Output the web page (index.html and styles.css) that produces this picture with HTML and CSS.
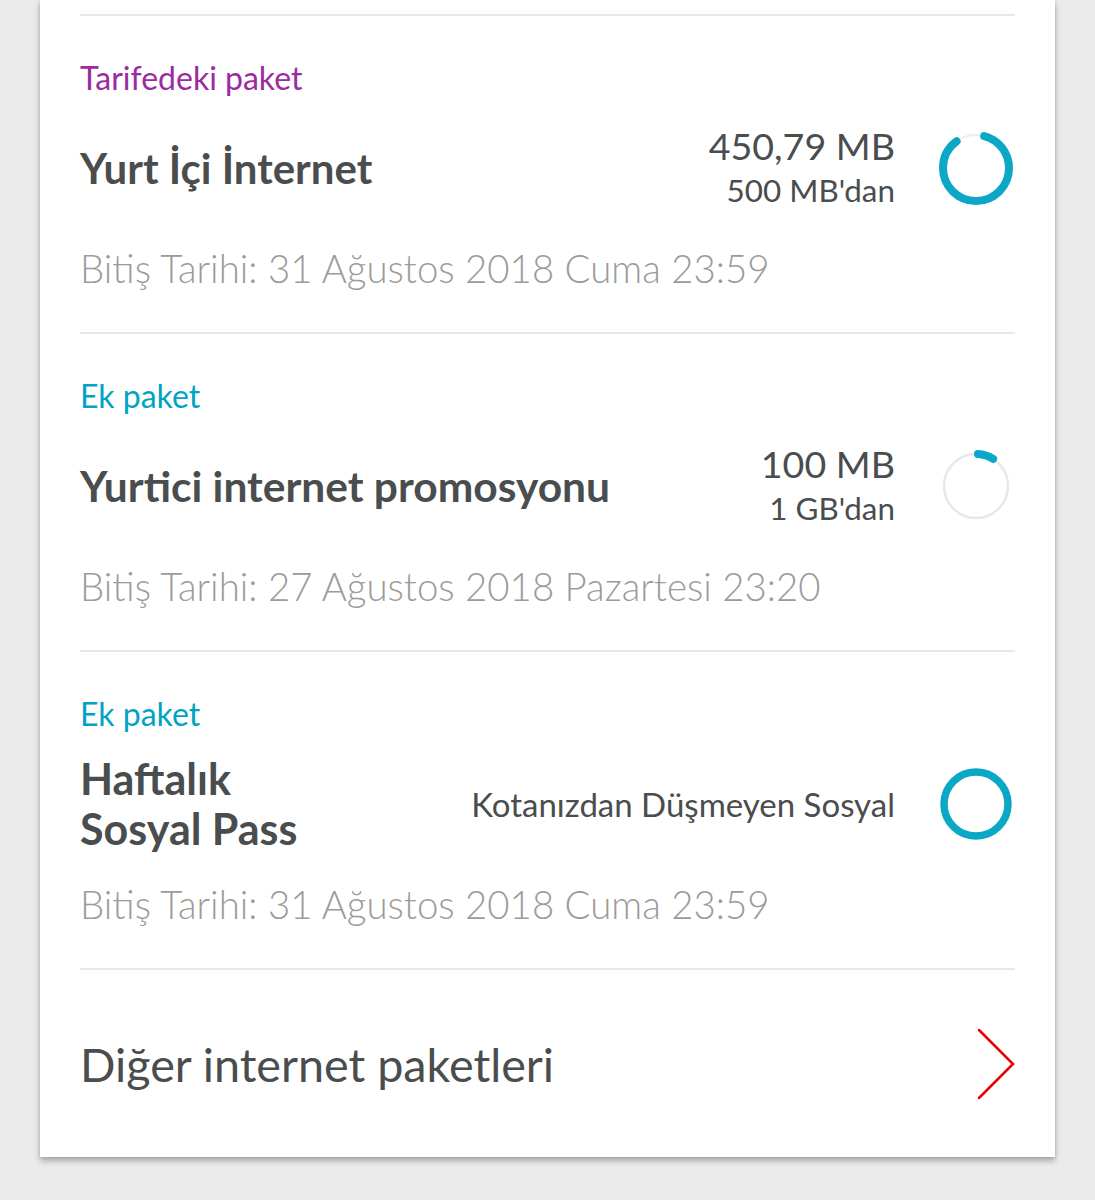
FILE: index.html
```html
<!DOCTYPE html>
<html lang="tr">
<head>
<meta charset="utf-8">
<title>Paketler</title>
<link rel="stylesheet" href="styles.css">
</head>
<body>
<div class="page">
<div class="card">
  <section class="pkg">
    <div class="label label-purple">Tarifedeki paket</div>
    <div class="row">
      <div class="title">Yurt İçi İnternet</div>
      <div class="amount">
        <div class="amount-main">450,79 MB</div>
        <div class="amount-sub">500 MB'dan</div>
      </div>
      <svg class="ring" viewBox="0 0 76 76" width="76" height="76">
        <circle cx="38" cy="38" r="33" fill="none" stroke="#ececec" stroke-width="2"/>
        <circle cx="38" cy="38" r="33" fill="none" stroke="#0aa8c6" stroke-width="8" stroke-linecap="round" pathLength="100" stroke-dasharray="86 100" stroke-dashoffset="-4" transform="rotate(-90 38 38)"/>
      </svg>
    </div>
    <div class="date">Bitiş Tarihi: 31 Ağustos 2018 Cuma 23:59</div>
  </section>
  <section class="pkg">
    <div class="label label-teal">Ek paket</div>
    <div class="row">
      <div class="title title-long">Yurtici internet promosyonu</div>
      <div class="amount">
        <div class="amount-main">100 MB</div>
        <div class="amount-sub">1 GB'dan</div>
      </div>
      <svg class="ring" viewBox="0 0 76 76" width="76" height="76">
        <circle cx="38" cy="38" r="32" fill="none" stroke="#e8e8e8" stroke-width="2.5"/>
        <circle cx="38" cy="38" r="32" fill="none" stroke="#0aa8c6" stroke-width="8" stroke-linecap="round" pathLength="100" stroke-dasharray="8 100" stroke-dashoffset="-1" transform="rotate(-90 38 38)"/>
      </svg>
    </div>
    <div class="date">Bitiş Tarihi: 27 Ağustos 2018 Pazartesi 23:20</div>
  </section>
  <section class="pkg">
    <div class="label label-teal">Ek paket</div>
    <div class="row">
      <div class="title title-wrap">Haftalık<br>Sosyal Pass</div>
      <div class="amount">
        <div class="amount-note">Kotanızdan Düşmeyen Sosyal</div>
      </div>
      <svg class="ring" viewBox="0 0 76 76" width="76" height="76">
        <circle cx="38" cy="38" r="32" fill="none" stroke="#0aa8c6" stroke-width="7.5"/>
      </svg>
    </div>
    <div class="date">Bitiş Tarihi: 31 Ağustos 2018 Cuma 23:59</div>
  </section>
  <a class="more" href="#">
    <span class="more-text">Diğer internet paketleri</span>
    <svg class="chevron" viewBox="0 0 40 72" width="40" height="72">
      <polyline points="4,2 38,36 4,70" fill="none" stroke="#e60000" stroke-width="2.5" stroke-linecap="round" stroke-linejoin="miter"/>
    </svg>
  </a>
</div>
</div>
</body>
</html>
```
FILE: styles.css
```css
html, body {
  margin: 0;
  padding: 0;
  background: #ebebeb;
}
body {
  font-family: Lato, "Open Sans", "Noto Sans", sans-serif;
  color: #4a4d4e;
}
.page {
  padding-bottom: 43px;
}
.card {
  width: 1015px;
  margin-left: 40px;
  box-sizing: border-box;
  background: #fff;
  padding: 14px 40px 0 40px;
  box-shadow: 0 4px 6px rgba(0,0,0,0.28), 0 0 3px rgba(0,0,0,0.12);
}
.pkg {
  border-top: 2px solid #e8e8e8;
  padding: 42px 0 40px 0;
}
.label {
  font-size: 32px;
  line-height: 40px;
}
.label-purple { color: #9c2aa0; }
.label-teal { color: #00a3c4; }
.row {
  display: flex;
  align-items: center;
  height: 100px;
  margin-top: 20px;
}
.title {
  flex: 1;
  font-size: 42px;
  font-weight: 700;
  line-height: 50px;
  color: #4a4d4e;
}
.title-long {
  font-size: 42.5px;
}
.title-wrap {
  font-size: 43px;
}
.amount {
  text-align: right;
  margin-right: 43px;
  color: #4a4d4e;
}
.amount-main {
  font-size: 37.6px;
  line-height: 44px;
}
.amount-sub {
  font-size: 31.4px;
  line-height: 44px;
}
.amount-note {
  font-size: 33px;
  line-height: 44px;
}
.ring {
  display: block;
  flex: none;
  margin-right: 1px;
}
.date {
  margin-top: 26px;
  font-size: 38.4px;
  font-weight: 300;
  line-height: 48px;
  color: #9b9b9b;
}
.more {
  display: flex;
  align-items: center;
  height: 187px;
  border-top: 2px solid #e8e8e8;
  text-decoration: none;
  color: #4a4d4e;
}
.more-text {
  flex: 1;
  font-size: 46.7px;
  line-height: 56px;
}
.chevron {
  display: block;
  flex: none;
}
```
